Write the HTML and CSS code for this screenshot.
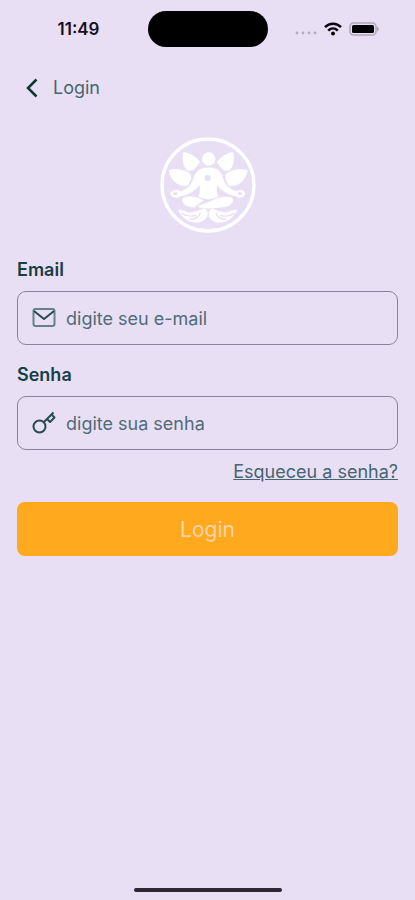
FILE: index.html
```html
<!DOCTYPE html>
<html lang="pt-BR">
<head>
  <meta charset="UTF-8" />
  <meta name="viewport" content="width=device-width, initial-scale=1.0" />
  <title>Login</title>
  <link rel="stylesheet" href="styles.css">
</head>
<body>

  <div class="status-bar">
    <span class="time">11:49</span>
    <div class="island"></div>
    <div class="status-icons">
      <svg class="dots" width="22" height="20" viewBox="0 0 22 20" aria-hidden="true">
        <circle cx="2" cy="14" r="1.4" /><circle cx="8" cy="14" r="1.4" /><circle cx="14" cy="14" r="1.4" /><circle cx="20" cy="14" r="1.4" />
      </svg>
      <svg class="wifi" width="18" height="14" viewBox="0 0 18 14" aria-hidden="true">
        <path d="M1 5.2C5.5.6 12.5.6 17 5.2M4.2 8.6c2.8-2.8 6.8-2.8 9.6 0" />
        <circle cx="9" cy="11.5" r="1.9" />
      </svg>
      <svg class="battery" width="30" height="14" viewBox="0 0 30 14" aria-hidden="true">
        <rect class="battery-case" x="1" y="1" width="26" height="12" rx="3.5" />
        <rect x="3" y="3" width="22" height="8" rx="1.5" />
        <path class="battery-tip" d="M28 4.5c2.500.8 2.500 4.200 0 5z" />
      </svg>
    </div>
  </div>

  <header>
    <a href="index.html" class="back-link" aria-label="Voltar">
      <svg width="12" height="20" viewBox="0 0 12 20" aria-hidden="true"><path d="M10.5 1.500L2 10l8.500 8.500" /></svg>
    </a>
    <h1>Login</h1>
  </header>

  <main class="main-content">
    <svg class="logo" width="96" height="96" viewBox="30 20 288 288" aria-hidden="true">
      <circle class="ring" cx="174" cy="164" r="138" />
      <!-- pétalas -->
      <path d="M101 66C121 70 141 81 149 95C144 104 136 109 131 118C124 121 116 121 110 118C99 105 97 83 101 66Z" />
      <path d="M249 66C229 70 211 81 201 95C206 104 213 109 218 118C226 121 233 121 240 118C251 105 253 83 249 66Z" />
      <path d="M57 120C78 114 105 118 120 130C125 140 121 153 111 166C82 169 61 147 57 120Z" />
      <path d="M292 120C271 114 245 118 229 130C224 140 228 153 238 166C267 169 288 147 292 120Z" />
      <!-- corpo -->
      <circle cx="176" cy="86" r="20" />
      <path d="M157 115Q176 109 195 115C211 120 216 133 220 149C225 165 242 178 258 184C270 176 283 180 285 190C281 202 266 205 257 196C237 193 215 181 201 163C197 177 199 188 204 198Q176 214 146 198C151 188 152 176 149 163C135 181 114 193 92 196C84 205 67 202 61 190C66 179 80 176 91 184C107 179 124 166 130 149C134 132 141 119 157 115Z" />
      <path d="M99 203C118 195 141 200 160 211Q145 218 133 230C112 231 92 219 99 203Z" />
      <path d="M246 203C232 197 207 201 185 212C166 220 151 225 144 229C164 236 188 233 216 230C237 230 254 218 246 203Z" />
      <!-- mãos -->
      <path d="M85 239C98 238 107 246 121 248C132 244 144 243 151 239C163 232 172 236 172 250C172 266 156 276 137 276C115 276 94 259 85 239Z" />
      <path d="M261 239C248 238 239 246 226 248C214 243 204 244 196 239C184 232 177 236 177 250C177 266 190 276 210 276C231 276 251 259 261 239Z" />
      <circle class="cutout" cx="173" cy="143" r="9" />
      <ellipse class="cutout" cx="76" cy="190" rx="7" ry="4" />
      <ellipse class="cutout" cx="270" cy="190" rx="7" ry="4" />
      <path class="cutline" d="M94 249C109 258 122 260 139 255M119 266C135 268 147 259 151 248M253 249C239 258 226 260 209 255M229 266C213 268 202 259 198 248" />
    </svg>

    <form id="login-form" class="login-form">
      <div class="form-group">
        <label for="email">Email</label>
        <div class="input-box">
          <svg width="24" height="24" viewBox="0 0 24 24" aria-hidden="true">
            <rect class="envelope" x="1.5" y="3" width="21" height="17" rx="2" />
            <path d="M2 5l10 8 10-8" />
          </svg>
          <input type="email" id="email" name="email" placeholder="digite seu e-mail">
        </div>
      </div>
      <div class="form-group">
        <label for="senha">Senha</label>
        <div class="input-box">
          <svg width="24" height="24" viewBox="0 0 24 24" aria-hidden="true">
            <circle cx="7.5" cy="15.5" r="6" />
            <path d="M12 11l9.500-9.500M15 8l3 3 4.500-4.500-3-3" />
          </svg>
          <input type="password" id="senha" name="senha" placeholder="digite sua senha">
        </div>
      </div>
      <a href="#" class="forgot-link">Esqueceu a senha?</a>
      <button type="submit">Login</button>
    </form>
  </main>

  <div class="home-indicator"></div>

</body>
</html>
```

FILE: styles.css
```css
* {
  box-sizing: border-box;
}

body {
  margin: 0;
  font-family: Inter, "Liberation Sans", sans-serif;
  background-color: #e8dff4;
  color: #173f46;
  min-height: 100vh;
  display: flex;
  flex-direction: column;
}

svg {
  flex-shrink: 0;
}

/* Barra de status */
.status-bar {
  display: grid;
  grid-template-columns: 1fr 120px 1fr;
  align-items: center;
  height: 58px;
}

.time {
  justify-self: end;
  margin-right: 48px;
  color: #15101f;
  font-size: 17px;
  font-weight: 600;
}

.island {
  height: 36px;
  border-radius: 18px;
  background-color: #000;
}

.status-icons {
  display: flex;
  align-items: center;
  gap: 7px;
  margin-left: 27px;
}

.dots {
  fill: #b5abc2;
}

.wifi path {
  fill: none;
  stroke: #0b0712;
  stroke-width: 2.5;
}

.battery-case {
  fill: none;
  stroke: #afa6b9;
  stroke-width: 1.5;
}

.battery-tip {
  fill: #afa6b9;
}

/* Cabeçalho */
header {
  display: flex;
  align-items: center;
  gap: 15px;
  height: 59px;
  padding: 0 26px;
}

.back-link {
  display: flex;
}

.back-link path {
  fill: none;
  stroke: #12352f;
  stroke-width: 2.5;
}

header h1 {
  margin: 0;
  color: #456570;
  font-size: 18px;
  font-weight: 400;
}

/* Conteúdo principal */
.main-content {
  flex: 1;
  display: flex;
  flex-direction: column;
  padding: 20px 17px;
}

.logo {
  align-self: center;
  margin-bottom: 27px;
  fill: #fff;
}

.logo path {
  stroke: #fff;
  stroke-width: 2;
}

.logo .ring {
  fill: none;
  stroke: #fff;
  stroke-width: 10;
}

.logo .cutout {
  fill: #e8dff4;
}

.logo .cutline {
  fill: none;
  stroke: #e8dff4;
  stroke-width: 4;
}

/* Formulário */
.login-form {
  display: flex;
  flex-direction: column;
}

.form-group {
  margin-bottom: 20px;
}

.form-group label {
  display: block;
  margin-bottom: 11px;
  font-size: 18px;
  line-height: 20px;
  font-weight: 600;
}

.input-box {
  display: flex;
  align-items: center;
  gap: 10px;
  height: 54px;
  padding: 0 14px;
  border: 1px solid #8c829b;
  border-radius: 9px;
}

.input-box svg {
  fill: none;
  stroke: #244c51;
  stroke-width: 2;
  stroke-linejoin: round;
}

.input-box .envelope {
  stroke: #66818a;
}

.input-box input {
  flex: 1;
  min-width: 0;
  padding: 0;
  border: none;
  outline: none;
  background: none;
  color: #173f46;
  font-family: inherit;
  font-size: 18px;
  font-weight: 400;
}

.input-box input::placeholder {
  color: #506c78;
  opacity: 1;
}

.forgot-link {
  align-self: flex-end;
  margin: -10px 0 18px;
  color: #456570;
  font-size: 18px;
  line-height: 24px;
  font-weight: 400;
}

.login-form button {
  height: 54px;
  border: none;
  border-radius: 8px;
  background-color: #ffa91f;
  color: #f5d3a8;
  font-family: inherit;
  font-size: 21px;
  font-weight: 400;
  cursor: pointer;
}

/* Indicador inferior */
.home-indicator {
  align-self: center;
  width: 148px;
  height: 4px;
  margin-bottom: 8px;
  border-radius: 2px;
  background-color: #2d2733;
}
```
